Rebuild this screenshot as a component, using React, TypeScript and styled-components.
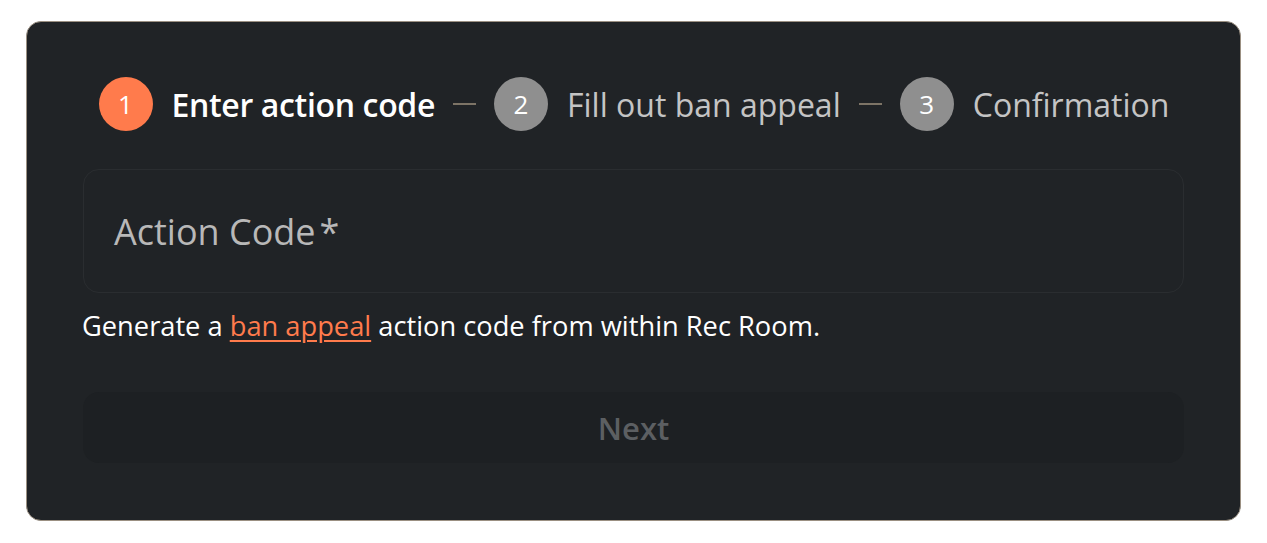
import React from "react";
import styled, { createGlobalStyle } from "styled-components";

const Global = createGlobalStyle`
  html, body { margin: 0; padding: 0; background: #ffffff; }
  body { font-family: "Open Sans", "Noto Sans", sans-serif; }
  * { box-sizing: border-box; }
`;

const Page = styled.div`
  padding: 21px 26px 0 26px;
  width: 1267px;
`;

const Card = styled.div`
  width: 1215px;
  height: 500px;
  background: #202326;
  border: 1px solid #9b9082;
  border-radius: 15px;
  padding: 55px 56px 0 56px;
  display: flex;
  flex-direction: column;
`;

const Stepper = styled.div`
  display: flex;
  align-items: center;
  justify-content: center;
  height: 54px;
  padding-left: 1px;
`;

const Step = styled.div`
  display: flex;
  align-items: center;
  gap: 19px;
`;

const Circle = styled.div<{ $active?: boolean }>`
  width: 54px;
  height: 54px;
  border-radius: 50%;
  background: ${(p) => (p.$active ? "#ff7b4c" : "#8f8f8f")};
  color: #ffffff;
  display: flex;
  align-items: center;
  justify-content: center;
  font-size: 26px;
  font-weight: 400;
`;

const StepLabel = styled.span<{ $active?: boolean }>`
  font-size: 32px;
  font-weight: ${(p) => (p.$active ? 600 : 400)};
  letter-spacing: ${(p) => (p.$active ? "-0.35px" : "0")};
  color: ${(p) => (p.$active ? "#ffffff" : "#c4c4c4")};
  white-space: nowrap;
`;

const Dash = styled.div`
  width: 23px;
  height: 2px;
  background: #7d7466;
  margin: 0 18px;
`;

const InputBox = styled.div`
  margin-top: 38px;
  height: 124px;
  border: 1px solid #2a2d30;
  border-radius: 16px;
  display: flex;
  align-items: center;
  padding-left: 30px;
`;

const Label = styled.span`
  font-size: 36px;
  color: #b8b8b8;
`;

const Required = styled.span`
  margin-left: 4px;
`;

const Helper = styled.p`
  margin: 16px 0 0 -1px;
  font-size: 27.25px;
  line-height: 34px;
  color: #ffffff;
`;

const Link = styled.a`
  color: #ff7b4c;
  text-decoration: underline;
  text-underline-offset: 4px;
  text-decoration-thickness: 1.5px;
`;

const NextButton = styled.button`
  margin-top: 49px;
  height: 71px;
  width: 100%;
  border: none;
  border-radius: 16px;
  background: #1d2023;
  color: #5c5f62;
  font-family: inherit;
  font-size: 31px;
  font-weight: 600;
  cursor: default;
`;

export default function App() {
  return (
    <>
      <Global />
      <Page>
        <Card>
          <Stepper>
            <Step>
              <Circle $active>1</Circle>
              <StepLabel $active>Enter action code</StepLabel>
            </Step>
            <Dash />
            <Step>
              <Circle>2</Circle>
              <StepLabel>Fill out ban appeal</StepLabel>
            </Step>
            <Dash />
            <Step>
              <Circle>3</Circle>
              <StepLabel>Confirmation</StepLabel>
            </Step>
          </Stepper>
          <InputBox>
            <Label>
              Action Code<Required>*</Required>
            </Label>
          </InputBox>
          <Helper>
            Generate a <Link>ban appeal</Link> action code from within Rec Room.
          </Helper>
          <NextButton disabled>Next</NextButton>
        </Card>
      </Page>
    </>
  );
}
